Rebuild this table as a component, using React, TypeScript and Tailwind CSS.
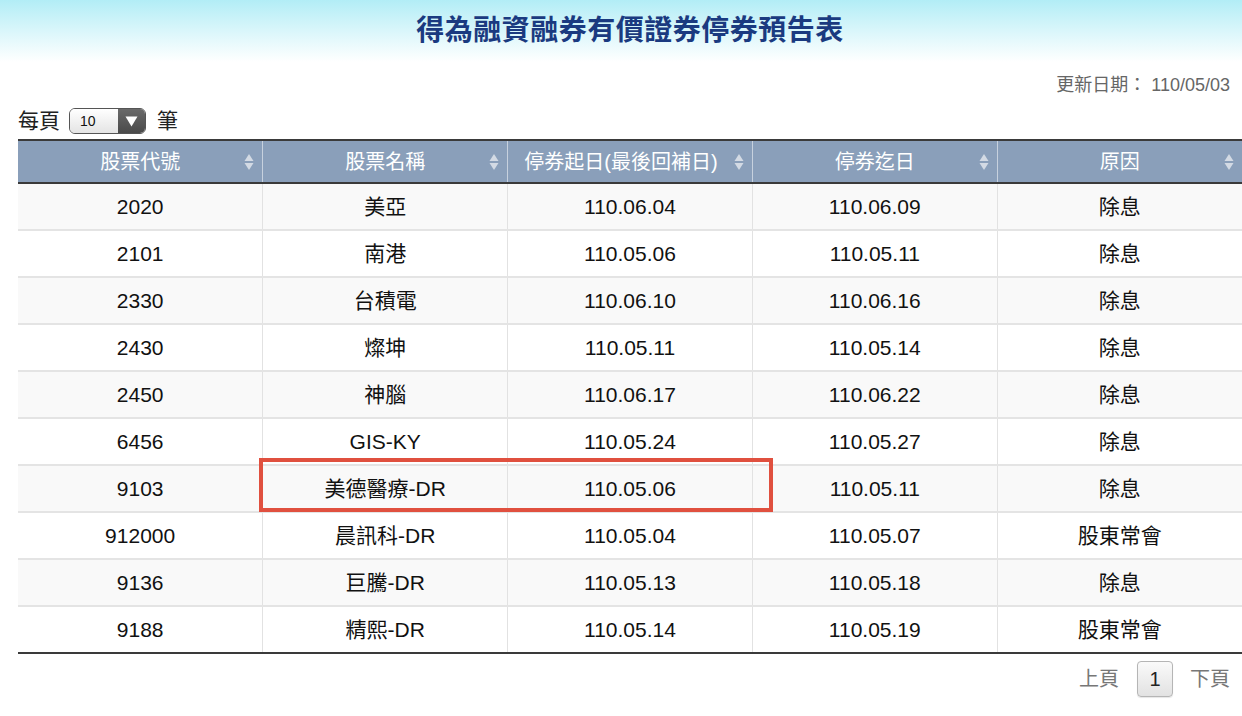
import React from 'react';

const font = "font-['Liberation_Sans','Noto_Sans_CJK_TC',sans-serif]";

const rows = [
  ['2020', '美亞', '110.06.04', '110.06.09', '除息'],
  ['2101', '南港', '110.05.06', '110.05.11', '除息'],
  ['2330', '台積電', '110.06.10', '110.06.16', '除息'],
  ['2430', '燦坤', '110.05.11', '110.05.14', '除息'],
  ['2450', '神腦', '110.06.17', '110.06.22', '除息'],
  ['6456', 'GIS-KY', '110.05.24', '110.05.27', '除息'],
  ['9103', '美德醫療-DR', '110.05.06', '110.05.11', '除息'],
  ['912000', '晨訊科-DR', '110.05.04', '110.05.07', '股東常會'],
  ['9136', '巨騰-DR', '110.05.13', '110.05.18', '除息'],
  ['9188', '精熙-DR', '110.05.14', '110.05.19', '股東常會'],
];

const headers = ['股票代號', '股票名稱', '停券起日(最後回補日)', '停券迄日', '原因'];

const SortIcon = () => (
  <svg width="10" height="18" viewBox="0 0 10 18" className="absolute right-[8px] top-1/2 -translate-y-1/2">
    <path d="M5 1 L9.5 8 L0.5 8 Z" fill="#d3dae4" />
    <path d="M0.5 10 L9.5 10 L5 17 Z" fill="#d3dae4" />
  </svg>
);

export default function App() {
  return (
    <div className={`w-[1242px] min-h-[716px] bg-white ${font} relative overflow-hidden`}>
      <div className="h-[62px] flex items-center justify-center bg-gradient-to-b from-[#b2edf6] to-white">
        <h1 className="ml-[18px] text-[28px] font-bold text-[#1a3a80] tracking-[0.5px]">得為融資融券有價證券停券預告表</h1>
      </div>

      <div className="h-[46px] flex items-center justify-end pr-[12px] text-[18px] text-[#666]">
        更新日期： 110/05/03
      </div>

      <div className="h-[31px] flex items-start pl-[18px] text-[21px] text-[#222]">
        <span className="leading-[26px]">每頁</span>
        <div className="ml-[9px] flex h-[26px] w-[77px] rounded-[6px] border border-[#555] overflow-hidden">
          <div className="flex-1 flex items-center pl-[10px] text-[14px] text-[#111] bg-gradient-to-b from-white to-[#e4e4e4]">10</div>
          <div className="w-[27px] flex items-center justify-center bg-gradient-to-b from-[#6a6a6a] to-[#4a4a4a]">
            <svg width="13" height="11" viewBox="0 0 13 11"><path d="M0.5 0.5 L12.5 0.5 L6.5 10.5 Z" fill="#fff" /></svg>
          </div>
        </div>
        <span className="ml-[11px] leading-[26px]">筆</span>
      </div>

      <table className="ml-[18px] w-[1224px] table-fixed border-collapse">
        <thead>
          <tr className="bg-[#8a9fba] border-t-2 border-b-2 border-[#3a3a3a]">
            {headers.map((h, i) => (
              <th
                key={i}
                className={`relative h-[43px] p-0 font-normal text-[20px] text-white text-center ${i < 4 ? 'border-r border-[#c7d1de]' : ''}`}
              >
                <span className={i === 2 ? 'pr-[18px]' : ''}>{h}</span>
                <SortIcon />
              </th>
            ))}
          </tr>
        </thead>
        <tbody>
          {rows.map((r, ri) => (
            <tr
              key={ri}
              className={`${ri % 2 === 0 ? 'bg-[#f9f9f9]' : 'bg-white'} ${ri === rows.length - 1 ? 'border-b-2 border-[#3a3a3a]' : 'border-b-2 border-[#e4e4e4]'}`}
            >
              {r.map((c, ci) => (
                <td
                  key={ci}
                  className={`h-[47px] p-0 text-center text-[21px] text-[#111] ${ci < 4 ? 'border-r border-[#e2e2e2]' : ''}`}
                >
                  {c}
                </td>
              ))}
            </tr>
          ))}
        </tbody>
      </table>

      <div className="mt-[7px] flex items-center justify-end pr-[12px] text-[20px] text-[#777]">
        <span>上頁</span>
        <div className="ml-[18px] w-[36px] h-[36px] flex items-center justify-center rounded-[4px] border border-[#b5b5b5] bg-gradient-to-b from-[#fafafa] to-[#e2e2e2] text-[#222] shadow-[0_1px_1px_rgba(0,0,0,0.1)]">1</div>
        <span className="ml-[17px]">下頁</span>
      </div>

      <div className="absolute left-[259px] top-[458px] w-[514px] h-[54px] border-[4px] border-[#e0503f] pointer-events-none" />
    </div>
  );
}
